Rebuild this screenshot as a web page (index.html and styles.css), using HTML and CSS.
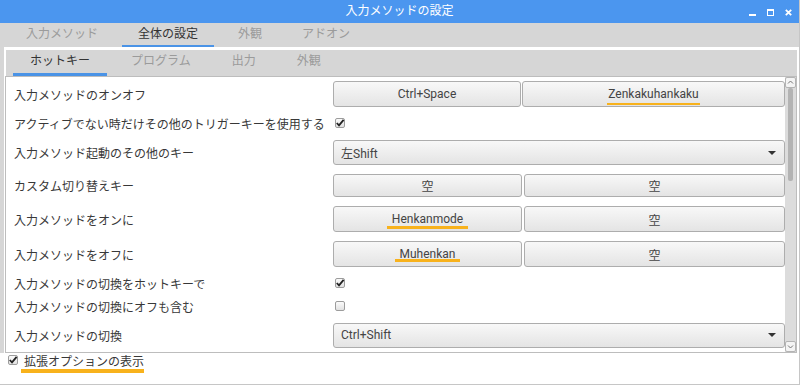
FILE: index.html
```html
<!DOCTYPE html>
<html lang="ja">
<head>
<meta charset="utf-8">
<title>入力メソッドの設定</title>
<link rel="stylesheet" href="styles.css">
</head>
<body>
<div class="window">
  <header class="titlebar">
    <span></span>
    <span class="title">入力メソッドの設定</span>
    <div class="wincontrols">
      <svg class="wc" width="7" height="7" viewBox="0 0 7 7"><rect x="0" y="5" width="7" height="2" fill="#fff"/></svg>
      <svg class="wc" width="7" height="7" viewBox="0 0 7 7"><rect x="0.5" y="0.5" width="6" height="6" fill="none" stroke="#fff" stroke-width="1"/><rect x="0" y="0" width="7" height="2" fill="#fff"/></svg>
      <svg class="wc" width="7" height="7" viewBox="0 0 7 7"><path d="M0.8 0.8 L6.2 6.2 M6.2 0.8 L0.8 6.2" stroke="#fff" stroke-width="1.8"/></svg>
    </div>
  </header>

  <nav class="outer-tabs">
    <span class="tab">入力メソッド</span>
    <span class="tab active">全体の設定</span>
    <span class="tab">外観</span>
    <span class="tab">アドオン</span>
  </nav>

  <div class="outer-pane">
    <nav class="inner-tabs">
      <span class="itab active">ホットキー</span>
      <span class="itab">プログラム</span>
      <span class="itab">出力</span>
      <span class="itab">外観</span>
    </nav>
    <div class="content">
      <div class="rows">
        <div class="row h30">
          <span class="label">入力メソッドのオンオフ</span>
          <div class="pair tight"><div class="btn">Ctrl+Space</div><div class="btn"><span class="mark m-zen">Zenkakuhankaku</span></div></div>
        </div>
        <div class="row h28">
          <span class="label">アクティブでない時だけその他のトリガーキーを使用する</span>
          <div class="ctl"><span class="check on"><svg width="10" height="10" viewBox="0 0 10 10"><path d="M1.8 5 L4 7.3 L8.6 1.8" fill="none" stroke="#222" stroke-width="1.8"/></svg></span></div>
        </div>
        <div class="row h31">
          <span class="label">入力メソッド起動のその他のキー</span>
          <div class="combo"><span>左Shift</span><span class="arrow"></span></div>
        </div>
        <div class="row h34">
          <span class="label">カスタム切り替えキー</span>
          <div class="pair small"><div class="btn">空</div><div class="btn">空</div></div>
        </div>
        <div class="row h34">
          <span class="label">入力メソッドをオンに</span>
          <div class="pair"><div class="btn"><span class="mark m-hen">Henkanmode</span></div><div class="btn">空</div></div>
        </div>
        <div class="row h36">
          <span class="label">入力メソッドをオフに</span>
          <div class="pair"><div class="btn"><span class="mark m-mu">Muhenkan</span></div><div class="btn">空</div></div>
        </div>
        <div class="row h22">
          <span class="label">入力メソッドの切換をホットキーで</span>
          <div class="ctl"><span class="check on"><svg width="10" height="10" viewBox="0 0 10 10"><path d="M1.8 5 L4 7.3 L8.6 1.8" fill="none" stroke="#222" stroke-width="1.8"/></svg></span></div>
        </div>
        <div class="row h24">
          <span class="label">入力メソッドの切換にオフも含む</span>
          <div class="ctl"><span class="check"></span></div>
        </div>
        <div class="row h34">
          <span class="label">入力メソッドの切換</span>
          <div class="combo"><span>Ctrl+Shift</span><span class="arrow"></span></div>
        </div>
      </div>
      <div class="scrollbar">
        <div class="sb-btn"><svg width="7" height="5" viewBox="0 0 7 5"><path d="M1 3.5 L3.5 1 L6 3.5" fill="none" stroke="#777" stroke-width="1"/></svg></div>
        <div class="sb-track"><div class="sb-thumb"></div></div>
        <div class="sb-btn"><svg width="7" height="5" viewBox="0 0 7 5"><path d="M1 1.5 L3.5 4 L6 1.5" fill="none" stroke="#777" stroke-width="1"/></svg></div>
      </div>
    </div>
  </div>

  <footer class="bottom">
    <span class="check on"><svg width="10" height="10" viewBox="0 0 10 10"><path d="M1.8 5 L4 7.3 L8.6 1.8" fill="none" stroke="#222" stroke-width="1.8"/></svg></span>
    <span class="mark m-foot">拡張オプションの表示</span>
  </footer>
</div>
</body>
</html>
```

FILE: styles.css
```css
* { box-sizing: border-box; margin: 0; padding: 0; }
html, body { width: 800px; height: 385px; overflow: hidden; }
body {
  font-family: Roboto, "Noto Sans CJK JP", sans-serif;
  font-size: 12px;
  color: #383838;
  background: #fff;
}
.window {
  width: 800px;
  height: 385px;
  display: flex;
  flex-direction: column;
  border-right: 1px solid #c6c6c6;
  border-bottom: 1px solid #c6c6c6;
}

/* title bar */
.titlebar {
  height: 23px;
  flex: none;
  background: #4b96ef;
  color: #fff;
  display: grid;
  grid-template-columns: 1fr auto 1fr;
  align-items: center;
  font-size: 12px;
}
.title { line-height: 23px; padding-top: 0; }
.wincontrols {
  justify-self: end;
  display: flex;
  align-items: center;
  gap: 11px;
  padding-right: 7px;
  padding-top: 1px;
}
.wc { display: block; }

/* outer tabs */
.outer-tabs {
  height: 24px;
  flex: none;
  background: #d6d6d6;
  display: flex;
  gap: 8px;
  padding-left: 10px;
}
.tab {
  padding: 0 16px;
  line-height: 22px;
  color: #9b9b9b;
  border-bottom: 2px solid transparent;
  white-space: nowrap;
}
.tab.active { color: #333; border-bottom-color: #4a93e6; }

/* outer pane */
.outer-pane {
  flex: none;
  padding: 2px 2px 0 1px;
  border-left: 4px solid #d6d6d6;
  display: flex;
  flex-direction: column;
}
.inner-tabs {
  height: 27px;
  background: #d6d6d6;
  border-top: 1px solid #fff;
  border-left: 1px solid #fff;
  display: flex;
  gap: 7px;
  padding-left: 7px;
}
.itab {
  padding: 0 17px;
  line-height: 23px;
  color: #9b9b9b;
  border-bottom: 3px solid transparent;
  white-space: nowrap;
}
.itab.active { color: #333; border-bottom-color: #4a93e6; }

.content {
  height: 277px;
  border: 1px solid #bdbdbd;
  display: flex;
}
.rows {
  flex: 1;
  padding: 2px 0 0 8px;
  display: flex;
  flex-direction: column;
}
.row {
  display: grid;
  grid-template-columns: 319px 452px;
  align-items: center;
}
.h22 { height: 22px; }
.h24 { height: 24px; }
.h28 { height: 28px; }
.h30 { height: 30px; }
.h31 { height: 31px; }
.h34 { height: 34px; }
.h36 { height: 36px; }
.label { white-space: nowrap; color: #383838; }

.pair {
  display: grid;
  grid-template-columns: 189px 1fr;
  gap: 2px;
  height: 26px;
}
.pair.tight { grid-template-columns: 188px 1fr; gap: 1px; }
.pair.small { height: 23px; }
.btn {
  border: 1px solid #adadad;
  border-radius: 3px;
  background: linear-gradient(#f8f8f8, #e4e4e4);
  display: flex;
  align-items: center;
  justify-content: center;
  color: #444;
  white-space: nowrap;
}

.mark { display: inline-block; border-bottom-style: solid; border-bottom-color: #f8b21c; }
.m-zen { line-height: 14px; padding: 0 1px 2px; border-bottom-width: 2px; margin: 0 -1px -4px; }
.m-hen { line-height: 14px; padding: 0 5px; border-bottom-width: 3px; margin: 0 -5px -3px; }
.m-mu { line-height: 10px; padding: 0 5px; border-bottom-width: 3px; margin: 0 -5px -3px; }
.m-foot { line-height: 14px; padding: 0 0 0 3px; border-bottom-width: 4px; margin: 0 0 -4px -3px; }

.ctl { display: flex; align-items: center; padding-left: 2px; }
.check {
  width: 10px;
  height: 10px;
  border: 1px solid #9c9c9c;
  border-radius: 2px;
  background: linear-gradient(#fbfbfb, #e2e2e2);
  display: inline-flex;
  align-items: center;
  justify-content: center;
  overflow: visible;
}
.check svg { display: block; margin: -1px; }

.combo {
  height: 25px;
  border: 1px solid #adadad;
  border-radius: 3px;
  background: linear-gradient(#f8f8f8, #e4e4e4);
  display: flex;
  align-items: center;
  justify-content: space-between;
  padding: 0 8px 0 7px;
  color: #444;
}
.arrow {
  width: 0;
  height: 0;
  border-left: 4px solid transparent;
  border-right: 4px solid transparent;
  border-top: 4px solid #333;
}

/* scrollbar */
.scrollbar {
  width: 11px;
  flex: none;
  display: flex;
  flex-direction: column;
  background: #dcdcdc;
}
.sb-btn {
  height: 11px;
  flex: none;
  border: 1px solid #b4b4b4;
  border-radius: 2px;
  background: #f4f4f4;
  display: flex;
  align-items: center;
  justify-content: center;
}
.sb-btn svg { display: block; }
.sb-track { flex: 1; display: flex; justify-content: center; }
.sb-thumb { width: 5px; height: 93px; background: #b3b3b3; border-radius: 2px; }

/* footer */
.bottom {
  flex: 1;
  display: flex;
  align-items: flex-start;
  gap: 6px;
  padding: 2px 0 0 8px;
}
.bottom .check { margin-top: 0; }
.m-foot { color: #383838; }
```
